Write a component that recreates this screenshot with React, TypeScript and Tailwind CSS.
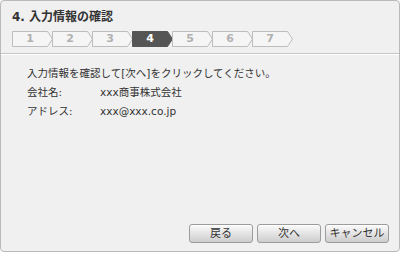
import React from "react";

const steps = [1, 2, 3, 4, 5, 6, 7];
const current = 4;

function Step({ n }: { n: number }) {
  const active = n === current;
  return (
    <div className="relative w-[40px] h-[16px] shrink-0">
      <svg width="41" height="16" viewBox="0 0 41 16" className="block">
        <polygon
          points="0.5,0.5 35.5,0.5 40.5,8 35.5,15.5 0.5,15.5"
          fill={active ? "#555555" : "#f5f5f5"}
          stroke={active ? "#555555" : "#bdbdbd"}
          strokeWidth="1"
        />
      </svg>
      <span
        className={
          "absolute left-0 top-0 w-[36px] h-[16px] flex items-center justify-center text-[11px] font-bold " +
          (active ? "text-white" : "text-[#b0b0b0]")
        }
      >
        {n}
      </span>
    </div>
  );
}

function Button({ label }: { label: string }) {
  return (
    <button className="w-[64px] h-[19px] rounded-[3px] border border-[#9c9c9c] bg-gradient-to-b from-[#fbfbfb] to-[#cdcdcd] text-[11px] leading-none text-[#333] shadow-[inset_0_1px_0_#ffffff]">
      {label}
    </button>
  );
}

export default function App() {
  return (
    <div
      className="w-[401px] h-[253px] bg-white"
      style={{ fontFamily: '"DejaVu Sans", "Noto Sans CJK JP", sans-serif' }}
    >
      <div className="w-[400px] h-[252px] border border-[#b9b9b9] rounded-[4px] bg-[#f0f0f0] flex flex-col">
        <div className="px-[11px] pt-[8px] text-[12px] leading-[16px] font-bold text-[#333]">
          4. 入力情報の確認
        </div>
        <div className="mt-[6px] ml-[11px] flex">
          {steps.map((n) => (
            <Step key={n} n={n} />
          ))}
        </div>
        <div className="mt-[6px] border-t border-[#c6c6c6] border-b border-b-white" />
        <div className="pt-[9px] px-[26px] text-[10.5px] leading-[19px] text-[#333]">
          <div>入力情報を確認して[次へ]をクリックしてください。</div>
          <div className="flex">
            <span className="w-[73px]">会社名:</span>
            <span>xxx商事株式会社</span>
          </div>
          <div className="flex">
            <span className="w-[73px]">アドレス:</span>
            <span>xxx@xxx.co.jp</span>
          </div>
        </div>
        <div className="mt-auto flex justify-end gap-[4px] pr-[10px] pb-[8px]">
          <Button label="戻る" />
          <Button label="次へ" />
          <Button label="キャンセル" />
        </div>
      </div>
    </div>
  );
}
